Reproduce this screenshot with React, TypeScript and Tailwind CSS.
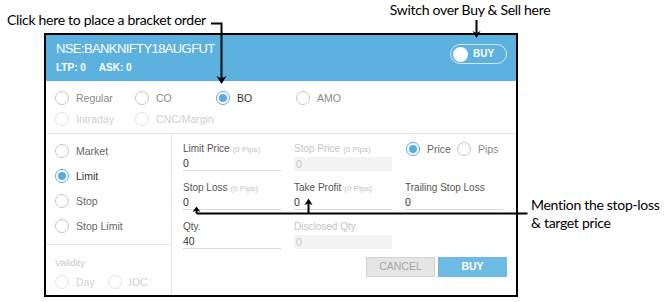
import React from "react";

const UI = "font-['Liberation_Sans',Arial,sans-serif]";

function Radio({
  label,
  state = "off",
  tone = "gray",
}: {
  label: string;
  state?: "on" | "off" | "disabled";
  tone?: "dark" | "gray" | "light" | "mid";
}) {
  const circle =
    state === "on" ? (
      <span className="flex h-[14px] w-[14px] shrink-0 items-center justify-center rounded-full border-[1.5px] border-[#5aabdf] bg-white">
        <span className="h-[8px] w-[8px] rounded-full bg-[#5aabdf]" />
      </span>
    ) : state === "disabled" ? (
      <span className="h-[14px] w-[14px] shrink-0 rounded-full border border-[#e4e4e4] bg-white" />
    ) : (
      <span className="h-[14px] w-[14px] shrink-0 rounded-full border border-[#c6c6c6] bg-white" />
    );
  const color =
    tone === "dark"
      ? "text-[#333]"
      : tone === "mid"
      ? "text-[#666]"
      : tone === "light"
      ? "text-[#cfcfcf]"
      : "text-[#8a8a8a]";
  return (
    <div className="flex items-center">
      {circle}
      <span className={`ml-[7px] text-[10.5px] leading-[14px] ${color}`}>{label}</span>
    </div>
  );
}

function Field({
  label,
  hint,
  value,
  disabled,
}: {
  label: string;
  hint?: string;
  value: string;
  disabled?: boolean;
}) {
  return (
    <div className="flex flex-col">
      <div className="h-[14px] whitespace-nowrap text-[10px] leading-[14px]">
        <span className={disabled ? "text-[#c4c4c4]" : "text-[#555]"}>{label}</span>
        {hint && <span className="ml-[3px] text-[8px] text-[#c2c2c2]">{hint}</span>}
      </div>
      {disabled ? (
        <div className="mt-[1px] h-[14px] bg-[#f4f4f4] pl-[2px] text-[10.5px] leading-[14px] text-[#c8c8c8]">
          {value}
        </div>
      ) : (
        <div className="mt-[1px] h-[14px] border-b border-[#d9d9d9] text-[10.5px] leading-[13px] text-[#333]">
          {value}
        </div>
      )}
    </div>
  );
}

export default function App() {
  return (
    <div className={`relative h-[302px] w-[665px] overflow-hidden bg-white ${UI}`}>
      {/* top annotation strip */}
      <div className="flex h-[33px] items-start font-['Lato','Open_Sans',sans-serif] text-[14px] leading-[18px] tracking-[-0.3px] text-black">
        <div className="pl-[7px] pt-[11px]">Click here to place a bracket order</div>
        <div className="ml-[184px] pt-[1px]">Switch over Buy &amp; Sell here</div>
      </div>

      <div className="flex items-start">
        {/* panel */}
        <div className="ml-[44px] flex h-[264px] w-[474px] flex-col border-2 border-black bg-white">
          {/* header */}
          <div className="flex h-[46px] justify-between bg-[#5db1de] text-white">
            <div className="pl-[10px] pt-[6px]">
              <div className="text-[13px] leading-[16px] tracking-[-0.6px]">NSE:BANKNIFTY18AUGFUT</div>
              <div className="mt-[4px] flex gap-[13px] text-[10px] font-bold leading-[13px]">
                <span>LTP: 0</span>
                <span>ASK: 0</span>
              </div>
            </div>
            <div className="mr-[9px] mt-[9px] flex h-[20px] w-[57px] items-center rounded-full border border-white/70 pl-[2px]">
              <div className="h-[15px] w-[15px] rounded-full bg-white" />
              <span className="ml-[5px] text-[10px] font-bold leading-[12px]">BUY</span>
            </div>
          </div>

          {/* product type */}
          <div className="border-b border-[#e6e6e6] pb-[4px] pl-[9px] pt-[6px]">
            <div className="flex h-[21px] items-center">
              <div className="w-[80px]"><Radio label="Regular" /></div>
              <div className="w-[81px]"><Radio label="CO" /></div>
              <div className="w-[80px]"><Radio label="BO" state="on" tone="dark" /></div>
              <div className="w-[80px]"><Radio label="AMO" /></div>
            </div>
            <div className="flex h-[21px] items-center">
              <div className="w-[80px]"><Radio label="Intraday" state="disabled" tone="light" /></div>
              <div className="w-[81px]"><Radio label="CNC/Margin" state="disabled" tone="light" /></div>
            </div>
          </div>

          {/* lower */}
          <div className="flex flex-1">
            <div className="flex w-[126px] flex-col border-r border-[#e6e6e6]">
              <div className="pl-[9px] pt-[4px]">
                <div className="flex h-[25px] items-center"><Radio label="Market" tone="mid" /></div>
                <div className="flex h-[25px] items-center"><Radio label="Limit" state="on" tone="dark" /></div>
                <div className="flex h-[25px] items-center"><Radio label="Stop" tone="mid" /></div>
                <div className="flex h-[25px] items-center"><Radio label="Stop Limit" tone="mid" /></div>
              </div>
              <div className="mt-[6px] border-t border-[#e6e6e6] pl-[9px] pt-[11px]">
                <div className="text-[9.5px] leading-[13px] text-[#c8c8c8]">Validity</div>
                <div className="mt-[3px] flex h-[20px] items-center">
                  <div className="w-[53px]"><Radio label="Day" state="disabled" tone="light" /></div>
                  <Radio label="IOC" state="disabled" tone="light" />
                </div>
              </div>
            </div>

            <div className="flex flex-1 flex-col pl-[11px] pt-[8px]">
              <div className="grid grid-cols-[98px_98px_98px] gap-x-[13px] gap-y-[10px]">
                <Field label="Limit Price" hint="(0 Pips)" value="0" />
                <Field label="Stop Price" hint="(0 Pips)" value="0" disabled />
                <div className="flex h-[14px] items-center pl-[1px]">
                  <Radio label="Price" state="on" tone="mid" />
                  <div className="ml-[6px]"><Radio label="Pips" tone="gray" /></div>
                </div>
                <Field label="Stop Loss" hint="(0 Pips)" value="0" />
                <Field label="Take Profit" hint="(0 Pips)" value="0" />
                <Field label="Trailing Stop Loss" value="0" />
                <Field label="Qty." value="40" />
                <Field label="Disclosed Qty." value="0" disabled />
                <div />
              </div>
              <div className="mt-[8px] flex justify-end gap-[3px] pr-[9px]">
                <div className="flex h-[20px] w-[69px] items-center justify-center border border-[#d3d3d3] bg-[#e5e5e5] text-[10.5px] text-[#a6a6a6]">
                  CANCEL
                </div>
                <div className="flex h-[20px] w-[69px] items-center justify-center bg-[#6dbae4] text-[10.5px] font-bold text-white">
                  BUY
                </div>
              </div>
            </div>
          </div>
        </div>

        {/* right annotation */}
        <div className="ml-[13px] mt-[163px] font-['Lato','Open_Sans',sans-serif] text-[14px] leading-[18px] tracking-[-0.3px] text-black">
          <div>Mention the stop-loss</div>
          <div>&amp; target price</div>
        </div>
      </div>

      {/* annotation arrows */}
      <svg className="pointer-events-none absolute left-0 top-0" width="665" height="302" viewBox="0 0 665 302">
        <g stroke="#000" strokeWidth="2" fill="none">
          <path d="M211 23.5 H221.5 V79" />
          <path d="M476.5 20 V33" />
          <path d="M196.5 213.5 H527.5" />
          <path d="M196.5 213.5 V210" />
          <path d="M308.5 213.5 V203" />
        </g>
        <g fill="#000">
          <polygon points="216.5,76 221.5,84 226.5,76 221.5,78.5" />
          <polygon points="472.5,31 476.5,38 480.5,31 476.5,33" />
          <polygon points="192.5,212 196.5,206.5 200.5,212 196.5,210.5" />
          <polygon points="304.5,205 308.5,198.5 312.5,205 308.5,203.5" />
        </g>
      </svg>
    </div>
  );
}
